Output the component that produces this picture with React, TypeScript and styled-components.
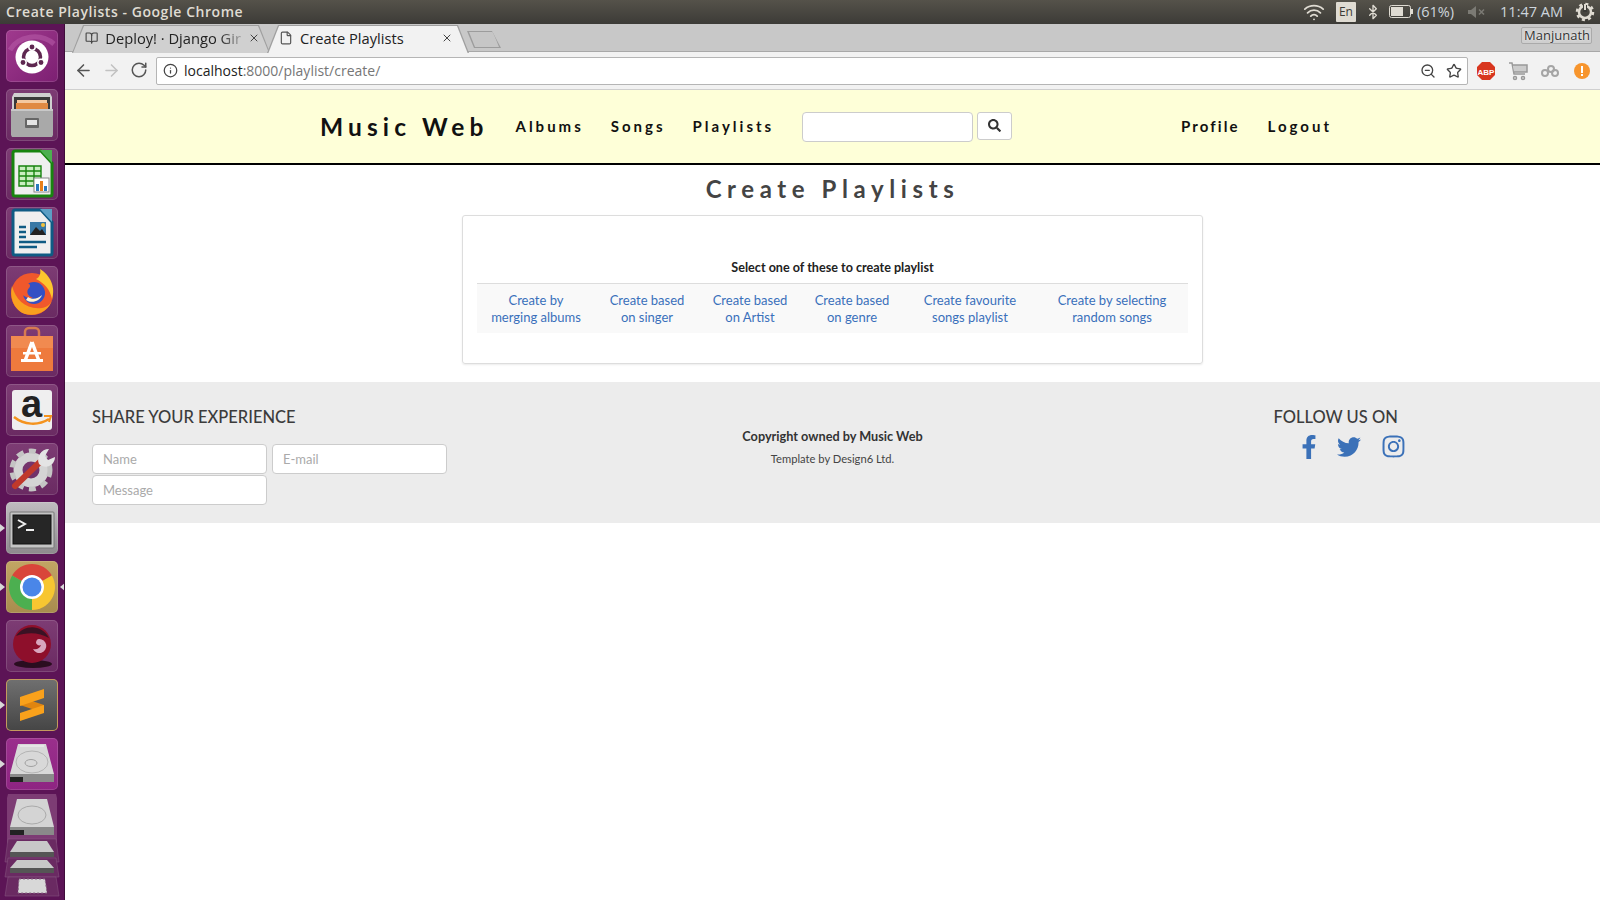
import { FC, ReactNode } from "react";
import styled, { createGlobalStyle } from "styled-components";
import { ArrowLeft, ArrowRight, RotateCw, Info, ZoomOut, Star, Wifi, Bluetooth, File, BookOpen, X } from "lucide-react";
import { FaFacebookF, FaTwitter, FaInstagram, FaSearch } from "react-icons/fa";

const GlobalStyle = createGlobalStyle`
  html, body {
    margin: 0;
    height: 100%;
    background: #fff;
    overflow: hidden;
  }
  * { box-sizing: border-box; }
`;

const Screen = styled.div`
  width: 1600px;
  height: 900px;
  display: flex;
  flex-direction: column;
  overflow: hidden;
`;

const TopBar = styled.div`
  height: 24px;
  flex: none;
  display: flex;
  align-items: center;
  padding: 0 5px 1px 6px;
  background: linear-gradient(#55524a, #3c3b37);
  color: #dfdbd2;
  font-family: "Open Sans", sans-serif;
`;

const WindowTitle = styled.div`
  font-size: 14px;
  font-weight: 600;
  letter-spacing: 0.55px;
`;

const Indicators = styled.div`
  margin-left: auto;
  display: flex;
  align-items: center;
`;

const Spacer = styled.span<{ $w: number }>`
  width: ${(p) => p.$w}px;
`;

const LangBox = styled.div`
  width: 20px;
  height: 20px;
  margin: 0 9px 0 11px;
  border-radius: 1px;
  background: #dfdbd2;
  color: #3c3b37;
  font-size: 12px;
  text-align: center;
  line-height: 20px;
`;

const IndicatorText = styled.span<{ $gap: number }>`
  font-size: 14.5px;
  color: #cdd5dc;
  margin-right: ${(p) => p.$gap}px;
`;

const Body = styled.div`
  flex: 1;
  display: flex;
  min-height: 0;
`;

const Launcher = styled.div`
  width: 65px;
  flex: none;
  display: flex;
  flex-direction: column;
  gap: 7px;
  padding: 6px 0 0 6px;
  background: #5c1456;
  border-right: 1px solid #3f0c3a;
  overflow: hidden;
`;

const Tile = styled.div<{ $tone: string; $left?: boolean; $right?: boolean; $ring?: string }>`
  position: relative;
  width: 52px;
  height: 52px;
  flex: none;
  border-radius: 5px;
  background: ${(p) => p.$tone};
  box-shadow: inset 0 0 0 1px ${(p) => p.$ring || "rgba(255,255,255,0.14)"};

  svg { display: block; }

  &::before {
    content: "";
    display: ${(p) => (p.$left ? "block" : "none")};
    position: absolute;
    left: -6px;
    top: 22px;
    border: 4px solid transparent;
    border-left: 5px solid #d8d8d8;
  }

  &::after {
    content: "";
    display: ${(p) => (p.$right ? "block" : "none")};
    position: absolute;
    right: -7px;
    top: 22px;
    border: 4px solid transparent;
    border-right: 5px solid #d8d8d8;
  }
`;

const StackArt = styled.svg`
  flex: none;
  margin: -3px 0 0 -6px;
  display: block;
`;

const Content = styled.div`
  flex: 1;
  min-width: 0;
  display: flex;
  flex-direction: column;
`;

const TabStrip = styled.div`
  height: 28px;
  flex: none;
  display: flex;
  padding: 1px 8px 0 7px;
  background: #c8c8c8;
  border-bottom: 1px solid #a8a8a8;
`;

const Tab = styled.div<{ $active?: boolean }>`
  position: relative;
  width: ${(p) => (p.$active ? 202 : 198)}px;
  margin-right: -3px;
  height: 28px;
  flex: none;
  display: flex;
  align-items: center;
  gap: 7px;
  padding: 0 ${(p) => (p.$active ? 16 : 10)}px 2px ${(p) => (p.$active ? 12 : 13)}px;
  color: #222;
  font-family: "Open Sans", sans-serif;
  font-size: 14.7px;
  z-index: ${(p) => (p.$active ? 2 : 1)};

  &::before, &::after {
    content: "";
    position: absolute;
    clip-path: polygon(0 100%, 11px 0, calc(100% - 11px) 0, 100% 100%);
    z-index: -1;
  }
  &::before { inset: 0; background: #9f9f9f; }
  &::after { inset: 1px 1px ${(p) => (p.$active ? -1 : 0)}px 1px; background: ${(p) => (p.$active ? "#f2f2f2" : "#d0d0d0")}; }
`;

const TabLabel = styled.span<{ $fade?: boolean }>`
  flex: 1;
  white-space: nowrap;
  ${(p) => p.$fade && "mask-image: linear-gradient(90deg, #000 84%, rgba(0, 0, 0, 0.25));"}
`;

const TabClose = styled(X)`
  flex: none;
  color: #444;
`;

const NewTab = styled.div`
  position: relative;
  width: 34px;
  height: 17px;
  margin: 6px 0 0 1px;
  flex: none;
  background: #9c9c9c;
  clip-path: polygon(0 0, 25px 0, 100% 100%, 7px 100%);

  &::after {
    content: "";
    position: absolute;
    inset: 1px 2px;
    background: #c6c6c6;
    clip-path: polygon(0 0, 24px 0, 100% 100%, 6px 100%);
  }
`;

const UserBadge = styled.div`
  margin-left: auto;
  width: 71px;
  height: 17px;
  margin-top: 2px;
  padding-right: 1px;
  border: 1px solid #aaa;
  border-radius: 2px;
  background: #cfcfcf;
  color: #333;
  font-family: "Open Sans", sans-serif;
  font-size: 13px;
  line-height: 15px;
  text-align: right;
  text-shadow: 0 0 2px #fff;
`;

const Toolbar = styled.div`
  height: 38px;
  flex: none;
  display: flex;
  align-items: center;
  padding: 0 0 0 9px;
  background: #f2f2f2;
  border-bottom: 1px solid #cfcfcf;
`;

const NavGlyphs = styled.div`
  display: flex;
  gap: 9px;
  margin-right: 8px;
  color: #555;
`;

const Omnibox = styled.div`
  width: 1312px;
  height: 28px;
  flex: none;
  display: flex;
  align-items: center;
  padding: 0 5px 0 6px;
  background: #fff;
  border: 1px solid #b5b5b5;
  border-radius: 2px;
  font-family: "Open Sans", sans-serif;
  font-size: 14px;
  color: #222;
`;

const UrlText = styled.span`
  margin-left: 6px;
  span { color: #767676; }
`;

const OmniActions = styled.div`
  margin-left: auto;
  display: flex;
  gap: 10px;
  color: #444;
`;

const Extensions = styled.div`
  display: flex;
  align-items: center;
  gap: 12px;
  margin-left: 8px;
`;

const Page = styled.div`
  flex: 1;
  background: #fff;
  font-family: Lato, sans-serif;
`;

const NavBar = styled.nav`
  height: 75px;
  display: flex;
  align-items: center;
  padding: 0 268px 0 255px;
  background: #feffd8;
  border-bottom: 2px solid #000;
  color: #111;
`;

const Brand = styled.a`
  font-size: 24.5px;
  font-weight: 700;
  letter-spacing: 5.1px;
  margin-right: 27px;
`;

const NavLink = styled.a<{ $gap: number; $spacing?: number }>`
  margin-top: -2px;
  font-size: 15px;
  font-weight: 700;
  letter-spacing: ${(p) => p.$spacing ?? 3}px;
  margin-right: ${(p) => p.$gap}px;
`;

const SearchInput = styled.input`
  width: 171px;
  height: 30px;
  border: 1px solid #ccc;
  border-radius: 4px;
  background: #fff;
`;

const SearchButton = styled.button`
  width: 35px;
  height: 28px;
  margin: -2px 0 0 4px;
  display: flex;
  align-items: center;
  justify-content: center;
  border: 1px solid #ccc;
  border-radius: 3px;
  background: #fff;
  color: #333;
`;

const NavRight = styled.div`
  margin-left: auto;
  display: flex;
  gap: 28px;
`;

const PageTitle = styled.h1`
  margin: 11px 0 13px;
  text-align: center;
  font-size: 24px;
  line-height: 26px;
  font-weight: 700;
  letter-spacing: 5.6px;
  color: #444;
`;

const Card = styled.div`
  width: 741px;
  height: 149px;
  margin: 0 auto;
  padding: 44px 14px 0;
  border: 1px solid #ddd;
  border-radius: 3px;
  box-shadow: 0 1px 2px rgba(0, 0, 0, 0.08);
`;

const CardHeading = styled.div`
  height: 24px;
  font-size: 12.6px;
  line-height: 16px;
  font-weight: 700;
  text-align: center;
  color: #222;
  border-bottom: 1px solid #ddd;
`;

const OptionRow = styled.div`
  display: grid;
  grid-template-columns: 118px 104px 102px 102px 134px 150px;
  height: 49px;
  padding-top: 8px;
  background: #f9f9f9;
`;

const OptionLink = styled.a`
  font-size: 13px;
  line-height: 17px;
  text-align: center;
  color: #3a70bb;
`;

const Footer = styled.footer`
  height: 141px;
  margin-top: 18px;
  display: grid;
  grid-template-columns: 1fr 400px 1fr;
  padding-top: 25px;
  background: #ececec;
  color: #444;
`;

const ShareColumn = styled.div`
  padding-left: 27px;
`;

const FooterHeading = styled.h3`
  margin: 0 0 17px;
  font-size: 16.5px;
  line-height: 20px;
  font-weight: 500;
  color: #3c3c3c;
`;

const Form = styled.form`
  display: grid;
  grid-template-columns: 175px 175px;
  column-gap: 5px;
  row-gap: 1px;
`;

const Field = styled.input`
  height: 30px;
  padding: 0 10px;
  border: 1px solid #ccc;
  border-radius: 4px;
  font-family: Lato, sans-serif;
  font-size: 13px;
  &::placeholder { color: #aaa; }
`;

const Center = styled.div`
  padding-top: 20px;
  text-align: center;
`;

const Copyright = styled.div`
  font-size: 12.7px;
  line-height: 18px;
  font-weight: 700;
  color: #333;
`;

const Template = styled.div`
  margin-top: 7px;
  font-size: 11.2px;
  line-height: 14px;
  color: #444;
`;

const Follow = styled.div`
  padding-left: 241px;
`;

const FollowHeading = styled(FooterHeading)`
  margin-bottom: 7px;
  white-space: nowrap;
`;

const Socials = styled.div`
  display: flex;
  align-items: center;
  gap: 20px;
  padding-left: 23px;
  color: #3b71b8;
`;

const FacebookGlyph = styled(FaFacebookF)`
  margin-right: -4px;
`;

const Ubuntu = () => (
  <svg width="52" height="52" viewBox="0 0 52 52">
    <path d="M4 20C12 6 34 2 48 14" fill="none" stroke="#b65aa6" strokeWidth="5" opacity="0.6" />
    <circle cx="26" cy="27" r="16.500" fill="#fff" />
    <circle cx="26" cy="27" r="8.500" fill="none" stroke="#5e2750" strokeWidth="3.500" />
    <circle cx="26" cy="17" r="3.200" fill="#5e2750" stroke="#fff" strokeWidth="1.500" />
    <circle cx="17" cy="32.500" r="3.200" fill="#5e2750" stroke="#fff" strokeWidth="1.500" />
    <circle cx="35" cy="32.500" r="3.200" fill="#5e2750" stroke="#fff" strokeWidth="1.500" />
  </svg>
);

const Files = () => (
  <svg width="52" height="52" viewBox="0 0 52 52">
    <path d="M8 4h36l2 4v36l-2 2H8l-2-2V8z" fill="#d0d0d0" />
    <rect x="8" y="8" width="36" height="14" fill="#3a3a3a" />
    <rect x="11" y="11" width="30" height="3" fill="#f4c9a0" />
    <rect x="10" y="14" width="32" height="6" fill="#e08a42" />
    <path d="M5 20h42v26l-1 2H6l-1-2z" fill="#a9a9a9" />
    <path d="M5 20h42v2H5z" fill="#c8c8c8" />
    <rect x="19" y="29" width="14" height="10" rx="1" fill="#666" />
    <rect x="21" y="31" width="10" height="5" fill="#e4e4e4" />
  </svg>
);

const DocIcon: FC<{ stroke: string; corner: string; children: ReactNode }> = ({ stroke, corner, children }) => (
  <svg width="52" height="52" viewBox="0 0 52 52">
    <path d="M9 3h26l11 12v31a2 2 0 0 1-2 2H9a2 2 0 0 1-2-2V5a2 2 0 0 1 2-2z" fill="#efefef" stroke={stroke} strokeWidth="3" />
    <path d="M34 2h12v13z" fill={corner} />
    {children}
  </svg>
);

const Calc = () => (
  <DocIcon stroke="#18840f" corner="#4caf50">
    <path d="M13 18h22v20H13zM13 23h22M13 28h22M13 33h22M20 18v20M28 18v20" fill="#c9eec0" stroke="#18840f" strokeWidth="1.400" />
    <rect x="28" y="30" width="15" height="14" fill="#fff" stroke="#888" />
    <rect x="30" y="36" width="3" height="7" fill="#2b7bbf" />
    <rect x="34" y="33" width="3" height="10" fill="#e8801a" />
    <rect x="38" y="38" width="3" height="5" fill="#2b7bbf" />
  </DocIcon>
);

const Writer = () => (
  <DocIcon stroke="#0f5b84" corner="#5c9fc4">
    <path d="M13 20h7M13 25h7M13 30h7M13 35h27M13 40h18" stroke="#0f5b84" strokeWidth="2.400" />
    <rect x="24" y="15" width="16" height="13" fill="#3878a5" />
    <path d="M24 28l6-8 4 4 2-2 4 6z" fill="#222" />
    <circle cx="37" cy="18" r="2" fill="#f5c33b" />
  </DocIcon>
);

const Firefox = () => (
  <svg width="52" height="52" viewBox="0 0 52 52">
    <circle cx="26" cy="28" r="21" fill="#f0582c" />
    <path d="M34 3c10 6 16 18 12 30-2-10-8-16-16-20 4-2 5-6 4-10z" fill="#fcc62e" />
    <path d="M6 20c4 14 14 24 30 22 6-1 10-5 11-11-3 14-16 20-28 17C9 45 3 32 6 20z" fill="#f9a01f" />
    <circle cx="28" cy="27" r="11" fill="#3350c4" />
    <path d="M14 13c4-2 8-3 13-2-2 2-5 3-7 6 4 0 5 3 3 5-3 3-2 8 4 10-6 1-13-3-14-10-.5-3 0-6 1-9z" fill="#f0582c" />
    <path d="M22 31c4 3 10 2 14-2-2 6-10 9-16 5z" fill="#fff3d0" />
  </svg>
);

const Software = () => (
  <svg width="52" height="52" viewBox="0 0 52 52">
    <path d="M19 12V7a4 4 0 0 1 4-4h6a4 4 0 0 1 4 4v5" fill="none" stroke="#d77a50" strokeWidth="2.500" />
    <path d="M5 11h42v35H5z" fill="#ee7a3d" />
    <path d="M5 11h42v12H5z" fill="#f18a50" />
    <path d="M26 17l-7 19M26 17l7 19" stroke="#fff" strokeWidth="3.500" fill="none" />
    <rect x="17" y="27" width="18" height="2.500" fill="#fff" />
    <rect x="15" y="34" width="22" height="3" fill="#fff" />
  </svg>
);

const AmazonGlyph = styled.text`
  font-family: "Liberation Sans", sans-serif;
  font-weight: 700;
  font-size: 38px;
  fill: #222;
`;

const Amazon = () => (
  <svg width="52" height="52" viewBox="0 0 52 52">
    <rect x="6" y="6" width="40" height="40" rx="3" fill="#efefef" />
    <AmazonGlyph x="15" y="33">a</AmazonGlyph>
    <path d="M8 33c10 8 24 9 35 2" fill="none" stroke="#f4931e" strokeWidth="2.500" />
    <path d="M38 32h7l-2 6" fill="none" stroke="#f4931e" strokeWidth="2" />
  </svg>
);

const SystemSettings = () => (
  <svg width="52" height="52" viewBox="0 0 52 52">
    <circle cx="25" cy="27" r="13" fill="none" stroke="#d4d4d4" strokeWidth="9" />
    <circle cx="25" cy="27" r="19" fill="none" stroke="#c4c4c4" strokeWidth="5" strokeDasharray="7 5.400" />
    <path d="M9 43L35 18" stroke="#c0392b" strokeWidth="6" strokeLinecap="round" />
    <path d="M33 21c-3-7 2-15 10-15l-4 7 3 4 7-3c0 8-9 13-16 7z" fill="#e4e4e4" />
  </svg>
);

const Terminal = () => (
  <svg width="52" height="52" viewBox="0 0 52 52">
    <rect x="4" y="10" width="44" height="36" rx="1" fill="#c4c4c4" stroke="#777" />
    <rect x="7" y="13" width="38" height="29" fill="#262626" stroke="#111" />
    <path d="M12 18l7 4-7 4" fill="none" stroke="#eee" strokeWidth="2" />
    <path d="M20 28h8" stroke="#eee" strokeWidth="2" />
  </svg>
);

const Chrome = () => (
  <svg width="52" height="52" viewBox="0 0 52 52">
    <path d="M26 26L6.100 14.500A23 23 0 0 1 45.900 14.500z" fill="#d9453a" />
    <path d="M26 26L45.900 14.500A23 23 0 0 1 26 49z" fill="#f7c631" />
    <path d="M26 26L26 49A23 23 0 0 1 6.100 14.500z" fill="#4caf50" />
    <circle cx="26" cy="26" r="12" fill="#fff" />
    <circle cx="26" cy="26" r="9.500" fill="#4a86e8" />
  </svg>
);

const CrystalBall = () => (
  <svg width="52" height="52" viewBox="0 0 52 52">
    <ellipse cx="27" cy="44" rx="19" ry="4" fill="#2a0d1f" />
    <circle cx="26" cy="24" r="19" fill="#8e0f2b" />
    <path d="M10 16c8-12 26-12 33 2-10-6-22-6-33-2z" fill="#3a1224" />
    <path d="M33 19a7 7 0 1 1-6 10c4 1 7-1 8-4-2 1-4 0-5-2 0-2 1-4 3-4z" fill="#d9a6bd" />
  </svg>
);

const Sublime = () => (
  <svg width="52" height="52" viewBox="0 0 52 52">
    <path d="M14 18L38 26V34L14 26z" fill="#e08510" />
    <path d="M14 18L38 10V19L14 27z" fill="#f9a11b" />
    <path d="M14 34L38 26V34L14 42z" fill="#f9a11b" />
  </svg>
);

const Disk = () => (
  <svg width="52" height="52" viewBox="0 0 52 52">
    <path d="M12 6h28l8 30v8H4v-8z" fill="#d8d8d8" />
    <path d="M14 8h24" stroke="#f2f2f2" />
    <ellipse cx="26" cy="24" rx="16" ry="11" fill="none" stroke="#b4b4b4" />
    <ellipse cx="25" cy="25" rx="6" ry="3.500" fill="none" stroke="#a0a0a0" />
    <rect x="4" y="36" width="44" height="8" fill="#8a8a8a" />
    <rect x="4" y="39" width="13" height="5" fill="#222" />
  </svg>
);

const SessionGear = () => (
  <svg width="20" height="20" viewBox="0 0 20 20">
    <circle cx="10" cy="10" r="6" fill="none" stroke="#dfdbd2" strokeWidth="2.500" />
    <circle cx="10" cy="10" r="8" fill="none" stroke="#dfdbd2" strokeWidth="2.500" strokeDasharray="3 3.300" />
    <path d="M10 3v7" stroke="#3c3b37" strokeWidth="4" />
    <path d="M10 2v6" stroke="#dfdbd2" strokeWidth="2" />
  </svg>
);

const Battery = () => (
  <svg width="24" height="13" viewBox="0 0 24 13">
    <rect x="0.500" y="0.500" width="21" height="12" rx="2" fill="none" stroke="#dfdbd2" />
    <rect x="2" y="2" width="12" height="9" fill="#dfdbd2" />
    <rect x="22" y="4" width="2" height="5" fill="#dfdbd2" />
  </svg>
);

const Speaker = () => (
  <svg width="18" height="12" viewBox="0 0 18 12">
    <path d="M0 4h3l5-4v12l-5-4H0z" fill="#7b7a74" />
    <path d="M11 3.500l5 5M16 3.500l-5 5" stroke="#7b7a74" strokeWidth="1.500" />
  </svg>
);

const Abp = () => (
  <svg width="20" height="20" viewBox="0 0 20 20">
    <path d="M6 1h8l5 5v8l-5 5H6l-5-5V6z" fill="#d8361f" />
    <text x="10" y="13.500" textAnchor="middle" fontSize="8" fontWeight="700" fontFamily="Liberation Sans, sans-serif" fill="#fff">ABP</text>
  </svg>
);

const Cart = () => (
  <svg width="20" height="20" viewBox="0 0 20 20" fill="none" stroke="#999" strokeWidth="1.500">
    <path d="M1 2h3l2 11h11" />
    <path d="M5 4h14v7H6" fill="#ccc" />
    <circle cx="7" cy="17" r="1.500" />
    <circle cx="15" cy="17" r="1.500" />
  </svg>
);

const Links = () => (
  <svg width="20" height="20" viewBox="0 0 20 20" fill="none" stroke="#a5a5a5" strokeWidth="2">
    <circle cx="5" cy="12" r="3" />
    <circle cx="11" cy="8" r="3" />
    <circle cx="15" cy="12" r="3" />
  </svg>
);

const Alert = () => (
  <svg width="20" height="20" viewBox="0 0 20 20">
    <circle cx="10" cy="10" r="8" fill="#f7952d" />
    <rect x="9" y="5" width="2" height="7" fill="#fff" />
    <rect x="9" y="13" width="2" height="2" fill="#fff" />
  </svg>
);

const Stack = () => (
  <StackArt width="64" height="106" viewBox="0 0 64 106">
    <path d="M8 0h48l1 4v44l-1 2H8l-1-2V4z" fill="#7d3c74" />
    <path d="M17 5h30l7 28v8H10v-8z" fill="#d4d4d4" />
    <ellipse cx="32" cy="21" rx="14" ry="9" fill="none" stroke="#aaa" />
    <rect x="10" y="33" width="44" height="8" fill="#8a8a8a" />
    <rect x="10" y="36" width="14" height="5" fill="#222" />
    <path d="M8 45h48l3 23H5z" fill="#6a2a62" stroke="#8a5a84" strokeWidth="0.500" />
    <path d="M17 47h30l7 11v5H10v-5z" fill="#c8c8c8" />
    <rect x="10" y="58" width="44" height="5" fill="#555" />
    <path d="M8 64h48l3 19H5z" fill="#6a2a62" stroke="#8a5a84" strokeWidth="0.500" />
    <path d="M17 66h30l7 8v5H10v-5z" fill="#c8c8c8" />
    <rect x="10" y="74" width="44" height="5" fill="#555" />
    <path d="M8 83h48l3 19H5z" fill="#6a2a62" stroke="#8a5a84" strokeWidth="0.500" />
    <path d="M19 85h26l2 14H18z" fill="#d8d8d8" strokeDasharray="2 2" stroke="#8a6a86" />
  </StackArt>
);

const tileTone = "linear-gradient(#7d3c74, #6a2a62)";
const options = [
  ["Create by", "merging albums"],
  ["Create based", "on singer"],
  ["Create based", "on Artist"],
  ["Create based", "on genre"],
  ["Create favourite", "songs playlist"],
  ["Create by selecting", "random songs"],
];

export default function App() {
  return (
    <Screen>
      <GlobalStyle />
      <TopBar>
        <WindowTitle>Create Playlists - Google Chrome</WindowTitle>
        <Indicators>
          <Wifi size={22} color="#dfdbd2" strokeWidth={2} />
          <LangBox>En</LangBox>
          <Bluetooth size={16} color="#dfdbd2" />
          <Spacer $w={8} />
          <Battery />
          <Spacer $w={4} />
          <IndicatorText $gap={14}>(61%)</IndicatorText>
          <Speaker />
          <Spacer $w={14} />
          <IndicatorText $gap={12}>11:47 AM</IndicatorText>
          <SessionGear />
        </Indicators>
      </TopBar>
      <Body>
        <Launcher>
          <Tile $tone="linear-gradient(135deg, #a03a8e, #7c1f72)"><Ubuntu /></Tile>
          <Tile $tone={tileTone}><Files /></Tile>
          <Tile $tone={tileTone}><Calc /></Tile>
          <Tile $tone={tileTone}><Writer /></Tile>
          <Tile $tone={tileTone}><Firefox /></Tile>
          <Tile $tone={tileTone}><Software /></Tile>
          <Tile $tone={tileTone}><Amazon /></Tile>
          <Tile $tone={tileTone}><SystemSettings /></Tile>
          <Tile $tone="linear-gradient(#c0bcc0, #8d898d)" $left><Terminal /></Tile>
          <Tile $tone="linear-gradient(#c2a564, #a88c4e)" $left $right><Chrome /></Tile>
          <Tile $tone={tileTone}><CrystalBall /></Tile>
          <Tile $tone="linear-gradient(#707070, #454545)" $ring="#c49a5e" $left><Sublime /></Tile>
          <Tile $tone="linear-gradient(#9a2f8c, #8e2482)" $left><Disk /></Tile>
          <Stack />
        </Launcher>
        <Content>
          <TabStrip>
            <Tab>
              <BookOpen size={16} color="#444" />
              <TabLabel $fade>Deploy! · Django Gir</TabLabel>
              <TabClose size={12} />
            </Tab>
            <Tab $active>
              <File size={14} color="#555" />
              <TabLabel>Create Playlists</TabLabel>
              <TabClose size={12} />
            </Tab>
            <NewTab />
            <UserBadge>Manjunath</UserBadge>
          </TabStrip>
          <Toolbar>
            <NavGlyphs>
              <ArrowLeft size={19} />
              <ArrowRight size={19} color="#c2c2c2" />
              <RotateCw size={18} />
            </NavGlyphs>
            <Omnibox>
              <Info size={15} color="#444" />
              <UrlText>localhost<span>:8000/playlist/create/</span></UrlText>
              <OmniActions>
                <ZoomOut size={16} />
                <Star size={16} />
              </OmniActions>
            </Omnibox>
            <Extensions>
              <Abp />
              <Cart />
              <Links />
              <Alert />
            </Extensions>
          </Toolbar>
          <Page>
            <NavBar>
              <Brand>Music Web</Brand>
              <NavLink $gap={27}>Albums</NavLink>
              <NavLink $gap={27}>Songs</NavLink>
              <NavLink $gap={28}>Playlists</NavLink>
              <SearchInput />
              <SearchButton><FaSearch size={13} /></SearchButton>
              <NavRight>
                <NavLink $gap={0} $spacing={2.1}>Profile</NavLink>
                <NavLink $gap={0}>Logout</NavLink>
              </NavRight>
            </NavBar>
            <PageTitle>Create Playlists</PageTitle>
            <Card>
              <CardHeading>Select one of these to create playlist</CardHeading>
              <OptionRow>
                {options.map(([first, second]) => (
                  <OptionLink key={first + second}>{first}<br />{second}</OptionLink>
                ))}
              </OptionRow>
            </Card>
            <Footer>
              <ShareColumn>
                <FooterHeading>SHARE YOUR EXPERIENCE</FooterHeading>
                <Form>
                  <Field placeholder="Name" />
                  <Field placeholder="E-mail" />
                  <Field placeholder="Message" />
                </Form>
              </ShareColumn>
              <Center>
                <Copyright>Copyright owned by Music Web</Copyright>
                <Template>Template by Design6 Ltd.</Template>
              </Center>
              <Follow>
                <FollowHeading>FOLLOW US ON</FollowHeading>
                <Socials>
                  <FacebookGlyph size={24} />
                  <FaTwitter size={24} />
                  <FaInstagram size={25} />
                </Socials>
              </Follow>
            </Footer>
          </Page>
        </Content>
      </Body>
    </Screen>
  );
}
